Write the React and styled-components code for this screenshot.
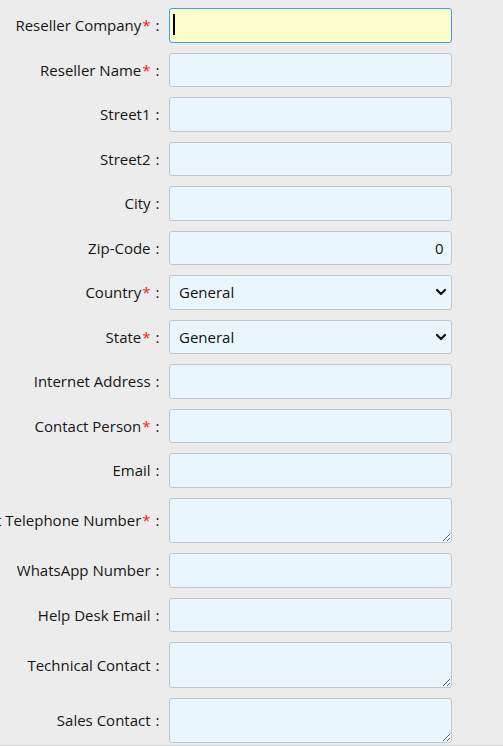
import React from 'react';
import styled, { createGlobalStyle } from 'styled-components';

const GlobalStyle = createGlobalStyle`
  html, body {
    margin: 0;
    padding: 0;
    background: #ececec;
  }
  body {
    font-family: "Open Sans", "Noto Sans", sans-serif;
    overflow: hidden;
  }
`;

const Page = styled.div`
  height: 745px;
  border-bottom: 1px solid #d4d4d4;
  overflow: hidden;
`;

const Form = styled.form`
  display: grid;
  grid-template-columns: 159.5px 282.5px;
  column-gap: 9.5px;
  row-gap: 10px;
  padding-top: 8px;
`;

const Label = styled.label`
  display: flex;
  justify-content: flex-end;
  align-items: center;
  white-space: nowrap;
  font-size: 15px;
  color: #161616;
`;

const Star = styled.span`
  color: #ff1a1a;
  margin-left: 1px;
`;

const Colon = styled.span`
  margin-left: 5px;
`;

const fieldBase = `
  box-sizing: border-box;
  width: 100%;
  margin: 0;
  border: 1px solid #c3c7cc;
  border-radius: 3px;
  background: #eaf6fe;
  font-family: "Open Sans", "Noto Sans", sans-serif;
  font-size: 15px;
  color: #111;
  outline: none;
`;

const Input = styled.input`
  ${fieldBase}
  height: 34.5px;
  padding: 0 7px 0 9px;
  text-align: ${(p) => (p.$right ? 'right' : 'left')};
  background: ${(p) => (p.$active ? '#ffffcc' : '#eaf6fe')};
  border-color: ${(p) => (p.$active ? '#35a3e6' : '#c3c7cc')};
  caret-color: transparent;
`;

const Area = styled.textarea`
  ${fieldBase}
  display: block;
  height: 45.5px;
  padding: 6px 9px;
  resize: vertical;
`;

const SelectWrap = styled.div`
  position: relative;
  display: flex;
`;

const Select = styled.select`
  ${fieldBase}
  appearance: none;
  height: 34.5px;
  padding: 0 30px 0 9px;
`;

const Chevron = styled.svg`
  position: absolute;
  right: 5px;
  top: 50%;
  width: 12px;
  height: 12px;
  margin-top: -6px;
  pointer-events: none;
`;

const FieldCell = styled.div`
  position: relative;
`;

const Caret = styled.span`
  position: absolute;
  left: 4px;
  top: 6px;
  width: 2px;
  height: 21px;
  background: #000;
`;

const fields = [
  { label: 'Reseller Company', req: true, active: true },
  { label: 'Reseller Name', req: true },
  { label: 'Street1' },
  { label: 'Street2' },
  { label: 'City' },
  { label: 'Zip-Code', value: '0', right: true },
  { label: 'Country', req: true, select: true },
  { label: 'State', req: true, select: true },
  { label: 'Internet Address' },
  { label: 'Contact Person', req: true },
  { label: 'Email' },
  { label: 'Contact Telephone Number', req: true, area: true },
  { label: 'WhatsApp Number' },
  { label: 'Help Desk Email' },
  { label: 'Technical Contact', area: true },
  { label: 'Sales Contact', area: true },
];

const Field = ({ f }) => {
  if (f.select) {
    return (
      <SelectWrap>
        <Select defaultValue="General">
          <option>General</option>
        </Select>
        <Chevron viewBox="0 0 12 12">
          <path d="M2 4l4 4 4-4" fill="none" stroke="#111" strokeWidth="2.2" strokeLinecap="round" strokeLinejoin="round" />
        </Chevron>
      </SelectWrap>
    );
  }
  if (f.area) return <Area />;
  return (
    <FieldCell>
      <Input $active={f.active} $right={f.right} defaultValue={f.value || ''} />
      {f.active && <Caret />}
    </FieldCell>
  );
};

export default function App() {
  return (
    <Page>
      <GlobalStyle />
      <Form>
        {fields.map((f) => (
          <React.Fragment key={f.label}>
            <Label>
              {f.label}
              {f.req && <Star>*</Star>}
              <Colon>:</Colon>
            </Label>
            <Field f={f} />
          </React.Fragment>
        ))}
      </Form>
    </Page>
  );
}
